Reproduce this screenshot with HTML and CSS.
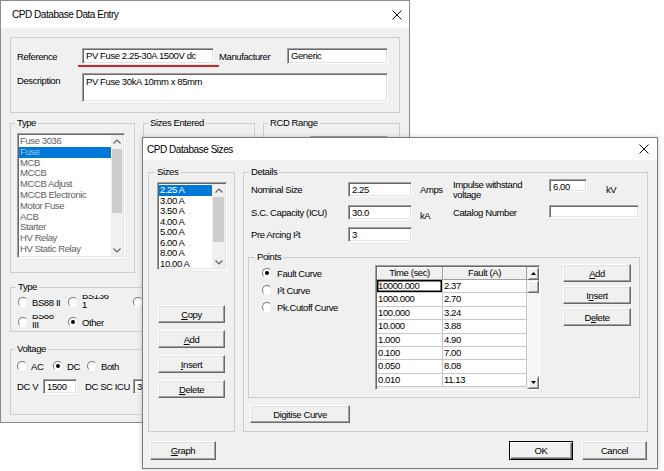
FILE: index.html
```html
<!DOCTYPE html>
<html lang="en">
<head>
    <meta charset="UTF-8">
    <title>CPD Database</title>
    <link rel="stylesheet" href="styles.css">
</head>
<body>
<div class="desk">

    <!-- Back dialog: data entry -->
    <div class="win win-back">
        <div class="titlebar">
            <span class="title">CPD Database Data Entry</span>
            <svg class="close" width="10" height="10" viewBox="0 0 10 10"><path d="M0.5 0.5L9.5 9.5M9.5 0.5L0.5 9.5"/></svg>
        </div>
        <div class="back-body">
            <fieldset class="grp grp-ref">
                <div class="ref-row">
                    <span class="ref-lbl">Reference</span>
                    <div class="edit ref-edit">PV Fuse 2.25-30A 1500V dc</div>
                    <span class="man-lbl">Manufacturer</span>
                    <div class="edit man-edit">Generic</div>
                </div>
                <div class="desc-row">
                    <span class="ref-lbl desc-lbl">Description</span>
                    <div class="edit desc-edit">PV Fuse 30kA 10mm x 85mm</div>
                </div>
            </fieldset>

            <div class="back-grid">
                <fieldset class="grp type-list">
                    <legend>Type</legend>
                    <div class="listbox type-box">
                        <ul class="items">
                            <li>Fuse 3036</li>
                            <li class="sel sel-dim">Fuse</li>
                            <li>MCB</li>
                            <li>MCCB</li>
                            <li>MCCB Adjust</li>
                            <li>MCCB Electronic</li>
                            <li>Motor Fuse</li>
                            <li>ACB</li>
                            <li>Starter</li>
                            <li>HV Relay</li>
                            <li>HV Static Relay</li>
                        </ul>
                        <div class="vscroll">
                            <div class="chev"><svg width="8" height="5" viewBox="0 0 8 5"><path d="M0.5 4.5L4 1L7.5 4.5"/></svg></div>
                            <div class="track"><div class="thumb type-thumb"></div></div>
                            <div class="chev"><svg width="8" height="5" viewBox="0 0 8 5"><path d="M0.5 0.5L4 4L7.5 0.5"/></svg></div>
                        </div>
                    </div>
                </fieldset>

                <fieldset class="grp sizes-entered">
                    <legend>Sizes Entered</legend>
                </fieldset>

                <fieldset class="grp rcd">
                    <legend>RCD Range</legend>
                    <div class="edit rcd-edit"></div>
                </fieldset>

                <fieldset class="grp type-radio">
                    <legend>Type</legend>
                    <div class="radio-grid">
                        <div class="opt"><span class="radio"></span><span class="rlbl">BS88 II</span></div>
                        <div class="opt"><span class="radio"></span><span class="rlbl two"><span>BS136<br>1</span></span></div>
                        <div class="opt"><span class="radio"></span><span class="rlbl">BS88 IV</span></div>
                        <div class="opt"><span class="radio"></span><span class="rlbl two"><span>BS88<br>III</span></span></div>
                        <div class="opt"><span class="radio on"></span><span class="rlbl">Other</span></div>
                    </div>
                </fieldset>

                <fieldset class="grp voltage">
                    <legend>Voltage</legend>
                    <div class="volt-row">
                        <div class="opt opt-ac"><span class="radio"></span><span class="rlbl">AC</span></div>
                        <div class="opt opt-dc"><span class="radio on"></span><span class="rlbl">DC</span></div>
                        <div class="opt"><span class="radio"></span><span class="rlbl">Both</span></div>
                    </div>
                    <div class="dc-row">
                        <span class="dcv-lbl">DC V</span>
                        <div class="edit dcv-edit">1500</div>
                        <span class="icu-lbl">DC SC ICU</span>
                        <div class="edit icu-edit">30</div>
                    </div>
                </fieldset>
            </div>
        </div>
    </div>

    <!-- Front dialog: sizes -->
    <div class="win win-front">
        <div class="titlebar front-title">
            <span class="title">CPD Database Sizes</span>
            <svg class="close" width="10" height="10" viewBox="0 0 10 10"><path d="M0.5 0.5L9.5 9.5M9.5 0.5L0.5 9.5"/></svg>
        </div>
        <div class="front-body">
            <div class="front-main">
                <fieldset class="grp sizes">
                    <legend>Sizes</legend>
                    <div class="listbox sizes-box">
                        <ul class="items">
                            <li class="sel">2.25 A</li>
                            <li>3.00 A</li>
                            <li>3.50 A</li>
                            <li>4.00 A</li>
                            <li>5.00 A</li>
                            <li>6.00 A</li>
                            <li>8.00 A</li>
                            <li>10.00 A</li>
                        </ul>
                        <div class="vscroll">
                            <div class="chev"><svg width="8" height="5" viewBox="0 0 8 5"><path d="M0.5 4.5L4 1L7.5 4.5"/></svg></div>
                            <div class="track"><div class="thumb sizes-thumb"></div></div>
                            <div class="chev"><svg width="8" height="5" viewBox="0 0 8 5"><path d="M0.5 0.5L4 4L7.5 0.5"/></svg></div>
                        </div>
                    </div>
                    <div class="btn-stack">
                        <button class="btn"><u>C</u>opy</button>
                        <button class="btn"><u>A</u>dd</button>
                        <button class="btn"><u>I</u>nsert</button>
                        <button class="btn"><u>D</u>elete</button>
                    </div>
                </fieldset>

                <fieldset class="grp details">
                    <legend>Details</legend>
                    <div class="detail-grid">
                        <span class="dlbl">Nominal Size</span>
                        <div class="edit dedit">2.25</div>
                        <span class="dlbl unit">Amps</span>
                        <span class="imp-lbl">Impulse withstand<br>voltage</span>
                        <div class="imp-cell"><div class="edit imp-edit">6.00</div><span class="kv">kV</span></div>

                        <span class="dlbl">S.C. Capacity (ICU)</span>
                        <div class="edit dedit">30.0</div>
                        <span class="dlbl unit">kA</span>
                        <span class="cat-lbl">Catalog Number</span>
                        <div class="edit cat-edit"></div>

                        <span class="dlbl">Pre Arcing I²t</span>
                        <div class="edit dedit">3</div>
                    </div>

                    <fieldset class="grp points">
                        <legend>Points</legend>
                        <div class="points-row">
                            <div class="curve-opts">
                                <div class="opt"><span class="radio on"></span><span class="rlbl">Fault Curve</span></div>
                                <div class="opt"><span class="radio"></span><span class="rlbl">I²t Curve</span></div>
                                <div class="opt"><span class="radio"></span><span class="rlbl">Pk.Cutoff Curve</span></div>
                            </div>

                            <div class="tbl">
                                <div class="cells">
                                    <div class="hd">Time (sec)</div><div class="hd">Fault (A)</div>
                                    <div class="cell cur">10000.000</div><div class="cell">2.37</div>
                                    <div class="cell">1000.000</div><div class="cell">2.70</div>
                                    <div class="cell">100.000</div><div class="cell">3.24</div>
                                    <div class="cell">10.000</div><div class="cell">3.88</div>
                                    <div class="cell">1.000</div><div class="cell">4.90</div>
                                    <div class="cell">0.100</div><div class="cell">7.00</div>
                                    <div class="cell">0.050</div><div class="cell">8.08</div>
                                    <div class="cell">0.010</div><div class="cell">11.13</div>
                                </div>
                                <div class="cscroll">
                                    <div class="cbtn"><svg width="5" height="3" viewBox="0 0 5 3"><path d="M0 3L2.5 0L5 3Z"/></svg></div>
                                    <div class="cbtn cthumb"></div>
                                    <div class="ctrack"></div>
                                    <div class="cbtn"><svg width="5" height="3" viewBox="0 0 5 3"><path d="M0 0L2.5 3L5 0Z"/></svg></div>
                                </div>
                            </div>

                            <div class="pt-btns">
                                <button class="btn"><u>A</u>dd</button>
                                <button class="btn">I<u>n</u>sert</button>
                                <button class="btn">D<u>e</u>lete</button>
                            </div>
                        </div>
                    </fieldset>

                    <button class="btn digitise">Digitise Curve</button>
                </fieldset>
            </div>

            <div class="front-foot">
                <button class="btn graph"><u>G</u>raph</button>
                <div class="ok-cancel">
                    <button class="btn btn-default">OK</button>
                    <button class="btn cancel">Cancel</button>
                </div>
            </div>
        </div>
    </div>

</div>
</body>
</html>
```

FILE: styles.css
```css
* {
    margin: 0;
    padding: 0;
    box-sizing: border-box;
}
body {
    background: #fff;
    font-family: "Liberation Sans", Arial, sans-serif;
    font-size: 9.5px;
    letter-spacing: -0.4px;
    color: #000;
}
.desk {
    position: relative;
    width: 664px;
    height: 471px;
    overflow: hidden;
}

/* Windows */
.win {
    position: absolute;
    display: flex;
    flex-direction: column;
    background: #f0f0f0;
    border: 1px solid #8a8a8a;
}
.win-back {
    left: 0;
    top: 0;
    width: 410px;
    height: 423px;
}
.win-front {
    left: 142px;
    top: 137px;
    width: 516px;
    height: 332px;
    border-color: #7c7c7c;
    box-shadow: 0 0 5px rgba(0, 0, 0, 0.2);
}
.titlebar {
    flex: none;
    display: flex;
    align-items: center;
    justify-content: space-between;
    background: #fff;
    height: 27px;
    padding: 0 7px 0 11px;
}
.front-title {
    height: 22px;
    padding: 0 8px 0 4px;
}
.title {
    font-size: 10px;
    letter-spacing: -0.45px;
}
.close path {
    fill: none;
    stroke: #111;
    stroke-width: 1;
}

/* Common controls */
.grp {
    border: 1px solid #cdcdcd;
    min-width: 0;
}
.grp legend {
    padding: 0 2px;
    margin-left: -2px;
    line-height: 12px;
}
.edit {
    background: #fff;
    border: 1px solid;
    border-color: #a0a0a0 #fff #fff #a0a0a0;
    box-shadow: inset 1px 1px #696969, inset -1px -1px #e3e3e3;
    padding: 1px 2px 0 3px;
    line-height: 12px;
    white-space: nowrap;
    overflow: hidden;
}
.btn {
    display: block;
    font: inherit;
    letter-spacing: inherit;
    color: #000;
    background: #f0f0f0;
    border: 1px solid;
    border-color: #fff #696969 #696969 #fff;
    box-shadow: inset -1px -1px #a0a0a0, inset 1px 1px #e3e3e3;
    height: 18px;
    text-align: center;
}
.btn u {
    text-decoration-thickness: 1px;
    text-underline-offset: 1px;
}
.btn-default {
    border-color: #000;
    box-shadow: inset 1px 1px #fff, inset -1px -1px #696969, inset -2px -2px #a0a0a0;
}
.opt {
    display: flex;
    align-items: center;
    height: 16px;
}
.radio {
    position: relative;
    flex: none;
    width: 10px;
    height: 10px;
    border-radius: 50%;
    border: 1px solid;
    border-color: #7a7a7a #e8e8e8 #fff #7a7a7a;
    background: #fff;
}
.radio.on::after {
    content: "";
    position: absolute;
    left: 2px;
    top: 2px;
    width: 4px;
    height: 4px;
    border-radius: 50%;
    background: #000;
}
.rlbl {
    margin-left: 4px;
    white-space: nowrap;
}
/* two-line captions that the dialog clips at the top */
.rlbl.two {
    height: 14px;
    overflow: hidden;
    display: flex;
    flex-direction: column;
    justify-content: flex-end;
    line-height: 9px;
}

/* List boxes */
.listbox {
    display: flex;
    background: #fff;
    border: 1px solid;
    border-color: #a0a0a0 #fff #fff #a0a0a0;
    box-shadow: inset 1px 1px #696969, inset -1px -1px #e3e3e3;
    padding: 1px;
}
.items {
    flex: 1;
    list-style: none;
    overflow: hidden;
    padding-top: 1px;
}
.items li {
    line-height: 10.8px;
    height: 10.8px;
    padding-left: 1px;
    white-space: nowrap;
}
.items li.sel {
    background: #0078d7;
    color: #fff;
}
.items li.sel-dim {
    color: #9fc6ea;
}
.vscroll {
    flex: none;
    width: 12px;
    display: flex;
    flex-direction: column;
    background: #f0f0f0;
}
.chev {
    height: 12px;
    display: flex;
    align-items: center;
    justify-content: center;
}
.chev path {
    fill: none;
    stroke: #606060;
    stroke-width: 1.2;
}
.track {
    flex: 1;
    padding: 0 1px;
}
.thumb {
    background: #cdcdcd;
}

/* Back dialog layout */
.back-body {
    flex: 1;
    padding: 9px 9px 0 9px;
}
.grp-ref {
    height: 76px;
    padding: 10px 0 0 6px;
}
.ref-row {
    display: flex;
    align-items: center;
    height: 16px;
}
.ref-lbl {
    width: 65px;
}
.ref-edit {
    position: relative;
    overflow: visible;
    width: 132px;
    height: 16px;
}
/* red annotation line under the reference field */
.ref-edit::after {
    content: "";
    position: absolute;
    left: -5px;
    right: -6px;
    bottom: -4px;
    height: 2px;
    background: #d3262d;
}
.man-lbl {
    margin-left: 5px;
    width: 68px;
}
.man-edit {
    width: 101px;
    height: 16px;
}
.desc-row {
    display: flex;
    align-items: flex-start;
    margin-top: 9px;
}
.desc-lbl {
    padding-top: 2px;
}
.desc-edit {
    width: 306px;
    height: 29px;
    padding-top: 2px;
}

.back-grid {
    display: grid;
    grid-template-columns: 125px 112px 137px;
    column-gap: 8px;
    grid-template-areas:
        "tl se rc"
        "tr tr rc"
        "vo vo rc";
    margin-top: 4px;
}
.type-list {
    grid-area: tl;
    height: 156px;
    padding: 4px 0 0 6px;
}
.type-box {
    width: 108px;
    height: 125px;
}
.type-box .items {
    color: #5e5e5e;
}
.type-thumb {
    margin-top: 2px;
    height: 64px;
}
.sizes-entered {
    grid-area: se;
    padding-left: 6px;
}
.rcd {
    grid-area: rc;
    padding: 7px 0 0 6px;
}
.rcd-edit {
    margin-left: 40px;
    width: 78px;
    height: 16px;
}
.type-radio {
    grid-area: tr;
    margin-top: 8px;
    height: 51px;
    padding: 1px 0 0 7px;
}
.radio-grid {
    display: grid;
    grid-template-columns: 50px 65px auto;
    row-gap: 4px;
}
.voltage {
    grid-area: vo;
    margin-top: 11px;
    height: 72px;
    padding: 3px 0 0 6px;
}
.volt-row {
    display: flex;
}
.opt-ac {
    width: 36px;
}
.opt-dc {
    width: 34px;
}
.dc-row {
    display: flex;
    align-items: center;
    margin-top: 4px;
    height: 16px;
}
.dcv-lbl {
    width: 26px;
}
.dcv-edit {
    width: 34px;
    height: 15px;
}
.icu-lbl {
    margin-left: 8px;
    width: 48px;
}
.icu-edit {
    width: 80px;
    height: 15px;
}

/* Front dialog layout */
.front-body {
    flex: 1;
    display: flex;
    flex-direction: column;
    padding: 6px 9px 0 5px;
}
.front-main {
    display: flex;
    gap: 8px;
    height: 266px;
}
.sizes {
    width: 87px;
    padding: 4px 0 0 8px;
}
.sizes-box {
    width: 70px;
    height: 88px;
}
.sizes-box .items li {
    line-height: 10.5px;
    height: 10.5px;
}
.sizes-box .vscroll {
    width: 13px;
}
.sizes-thumb {
    margin-top: 1px;
    height: 45px;
}
.btn-stack {
    margin: 35px 0 0 1px;
    display: flex;
    flex-direction: column;
    gap: 7px;
}
.btn-stack .btn {
    width: 67px;
}

.details {
    width: 405px;
    padding: 1px 0 8px 7px;
}
.detail-grid {
    display: grid;
    grid-template-columns: 97px 64px 41px 96px 1fr;
    grid-template-rows: 26px 22px 18px;
    align-items: start;
}
.dlbl {
    margin-top: 3px;
    line-height: 15px;
    white-space: nowrap;
}
.detail-grid .dlbl:nth-child(6),
.detail-grid .dlbl:nth-child(11) {
    margin-top: 0;
}
.unit {
    padding-left: 8px;
}
.dedit {
    height: 15px;
    margin-top: 3px;
}
.detail-grid .dedit:nth-child(7),
.detail-grid .dedit:nth-child(12) {
    margin-top: 0;
}
.imp-lbl {
    margin-top: 1px;
    line-height: 10px;
}
.imp-cell {
    display: flex;
    align-items: flex-start;
}
.imp-edit {
    width: 38px;
    height: 13px;
    line-height: 11px;
}
.kv {
    margin: 4px 0 0 19px;
    line-height: 13px;
}
.cat-lbl {
    margin-top: 1px;
    line-height: 13px;
}
.cat-edit {
    width: 90px;
    height: 13px;
}

.points {
    margin: 6px 0 0 -3px;
    width: 392px;
    height: 147px;
    padding: 2px 0 0 8px;
}
.points-row {
    display: flex;
    align-items: flex-start;
}
.curve-opts {
    width: 118px;
    margin-top: 2px;
    padding-left: 5px;
    display: flex;
    flex-direction: column;
    gap: 5px;
}
.curve-opts .opt {
    height: 12px;
}
.curve-opts .rlbl {
    margin-left: 5px;
}

/* Points grid */
.tbl {
    display: flex;
    width: 165px;
    height: 125px;
    border: 1px solid;
    border-color: #a0a0a0 #fff #fff #a0a0a0;
    box-shadow: inset 1px 1px #696969;
    padding: 1px 0 0 1px;
    background: #f0f0f0;
}
.cells {
    width: 150px;
    display: grid;
    grid-template-columns: 66px 84px;
    grid-template-rows: 13px repeat(8, 13.4px);
    align-content: start;
}
.hd {
    background: #f0f0f0;
    border-right: 1px solid #a0a0a0;
    border-bottom: 1px solid #a0a0a0;
    box-shadow: inset 1px 1px #fff;
    text-align: center;
    line-height: 12px;
}
.cell {
    background: #fff;
    border-right: 1px solid #c8c8c8;
    border-bottom: 1px solid #c8c8c8;
    padding-left: 1px;
    line-height: 12px;
}
.cell.cur {
    box-shadow: inset 0 0 0 1.5px #000;
}
.cscroll {
    flex: 1;
    display: flex;
    flex-direction: column;
    background: #f6f6f6;
}
.cbtn {
    height: 13px;
    display: flex;
    align-items: center;
    justify-content: center;
    background: #f0f0f0;
    border: 1px solid;
    border-color: #f0f0f0 #696969 #696969 #f0f0f0;
    box-shadow: inset 1px 1px #fff, inset -1px -1px #a0a0a0;
}
.cbtn path {
    fill: #000;
}
.ctrack {
    flex: 1;
}
.pt-btns {
    margin: -1px 0 0 23px;
    display: flex;
    flex-direction: column;
    gap: 4px;
}
.pt-btns .btn {
    width: 68px;
}
.digitise {
    margin: 7px 0 0 -1px;
    width: 100px;
}

.front-foot {
    display: flex;
    justify-content: space-between;
    margin-top: 9px;
}
.graph {
    margin-left: 2px;
    width: 66px;
    height: 19px;
}
.ok-cancel {
    display: flex;
    gap: 9px;
    margin-right: 1px;
}
.ok-cancel .btn {
    width: 64px;
    height: 19px;
}
.ok-cancel .cancel {
    width: 65px;
}
```
